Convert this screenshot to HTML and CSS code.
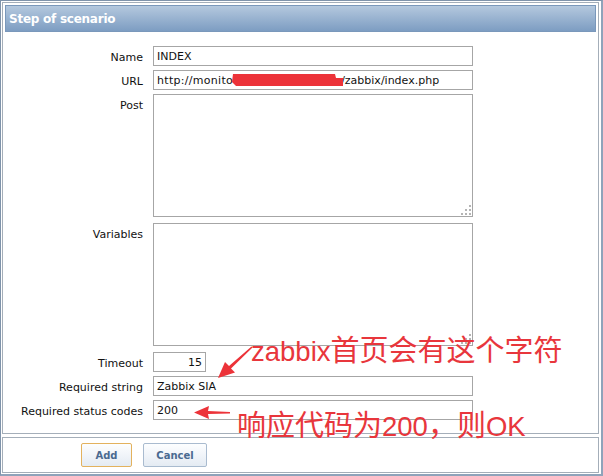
FILE: index.html
```html
<!DOCTYPE html>
<html>
<head>
<meta charset="utf-8">
<title>Step of scenario</title>
<link rel="stylesheet" href="styles.css">
</head>
<body>
<div class="window">
  <div class="panel">
    <div class="header">Step of scenario</div>
    <div class="form">
      <div class="label">Name</div>
      <div class="field">INDEX</div>
      <div class="label">URL</div>
      <div class="field"><span class="host">http://monito</span><span class="masked"></span><span>/zabbix/index.php</span></div>
      <div class="label">Post</div>
      <div class="field area"><svg class="grip" width="12" height="12" viewBox="0 0 12 12"><rect x="9" y="1" width="2" height="2"/><rect x="5" y="5" width="2" height="2"/><rect x="9" y="5" width="2" height="2"/><rect x="1" y="9" width="2" height="2"/><rect x="5" y="9" width="2" height="2"/><rect x="9" y="9" width="2" height="2"/></svg></div>
      <div class="label">Variables</div>
      <div class="field area"><svg class="grip" width="12" height="12" viewBox="0 0 12 12"><rect x="9" y="1" width="2" height="2"/><rect x="5" y="5" width="2" height="2"/><rect x="9" y="5" width="2" height="2"/><rect x="1" y="9" width="2" height="2"/><rect x="5" y="9" width="2" height="2"/><rect x="9" y="9" width="2" height="2"/></svg></div>
      <div class="label">Timeout</div>
      <div class="field short">15</div>
      <div class="label">Required string</div>
      <div class="field">Zabbix SIA</div>
      <div class="label">Required status codes</div>
      <div class="field">200</div>
    </div>
  </div>
  <div class="footer">
    <button class="btn btn-add">Add</button>
    <button class="btn">Cancel</button>
  </div>
  <svg class="marks" width="603" height="476" viewBox="0 0 603 476">
    <polygon points="233,74 335,74 336,78 343,78 343,86 236,86 232,82" />
    <polygon points="218,378 225,362 229,366 251.5,346.5 252.5,347.5 231,368.5 235,372.5" />
    <polygon points="194,412.5 209,406 208,411 230,412 230,413.5 208,414 209,419" />
  </svg>
  <div class="note note-top"><span class="latin">zabbix</span>首页会有这个字符</div>
  <div class="note note-bottom">响应代码为<span class="latin">200</span>，则<span class="latin">OK</span></div>
</div>
</body>
</html>
```
FILE: styles.css
```css
html, body {
  margin: 0;
  padding: 0;
  background: #ffffff;
}

.window {
  position: relative;
  width: 603px;
  height: 476px;
  box-sizing: border-box;
  border-top: 1px solid #7f93aa;
  border-left: 1px solid #7f93aa;
  border-right: 2px solid #8fa3ba;
  border-bottom: 2px solid #8fa3ba;
  padding: 1px 2px 1px 1px;
  display: flex;
  flex-direction: column;
  gap: 3px;
  font-family: "DejaVu Sans", Verdana, sans-serif;
  font-size: 11px;
  color: #111;
  background: #fff;
}

.panel {
  height: 432px;
  box-sizing: border-box;
  border: 1px solid #a4aeb9;
  padding: 2px;
}

.header {
  height: 27px;
  box-sizing: border-box;
  border: 1px solid #7a98bb;
  background: linear-gradient(#b4c8de, #7d9dc2);
  color: #ffffff;
  font-weight: bold;
  font-size: 12px;
  letter-spacing: -0.25px;
  line-height: 27px;
  padding-left: 3px;
}

.form {
  margin-top: 14px;
  display: grid;
  grid-template-columns: 138px 320px;
  column-gap: 10px;
  row-gap: 4px;
}

.label {
  text-align: right;
  line-height: 20px;
  padding-top: 2px;
  height: 20px;
  box-sizing: border-box;
  white-space: nowrap;
}

.field {
  position: relative;
  height: 20px;
  box-sizing: border-box;
  border: 1px solid #a6a6a6;
  padding: 1px 3px 0;
  line-height: 18px;
  white-space: nowrap;
  overflow: hidden;
}

.host {
  letter-spacing: 0.3px;
}

.masked {
  display: inline-block;
  width: 108px;
}

.area {
  height: 123px;
  margin-bottom: 2px;
}

.grip {
  position: absolute;
  right: 0;
  bottom: 0;
  fill: #b4b4b4;
}

.short {
  width: 53px;
  text-align: right;
}

.footer {
  height: 36px;
  box-sizing: border-box;
  border: 1px solid #a4aeb9;
  display: flex;
  align-items: center;
  gap: 11px;
  padding-left: 78px;
}

.btn {
  height: 24px;
  box-sizing: border-box;
  border: 1px solid #a9bbcf;
  border-radius: 2px;
  background: linear-gradient(#fdfeff, #e4ebf3);
  color: #4a6a90;
  font-family: "DejaVu Sans", Verdana, sans-serif;
  font-weight: bold;
  font-size: 10px;
  padding: 0;
  width: 64px;
}

.btn-add {
  width: 51px;
  border-color: #e3b25e;
}

.marks {
  position: absolute;
  left: -1px;
  top: -1px;
  fill: #ec3339;
  pointer-events: none;
}

.note {
  position: absolute;
  color: #e8363c;
  font-family: "Liberation Sans", "Noto Sans CJK SC", sans-serif;
  font-size: 29px;
  line-height: 1;
  white-space: nowrap;
}

.latin {
  font-size: 27.5px;
}

.note-top {
  left: 250px;
  top: 336px;
}

.note-bottom {
  left: 236px;
  top: 411px;
}
```
